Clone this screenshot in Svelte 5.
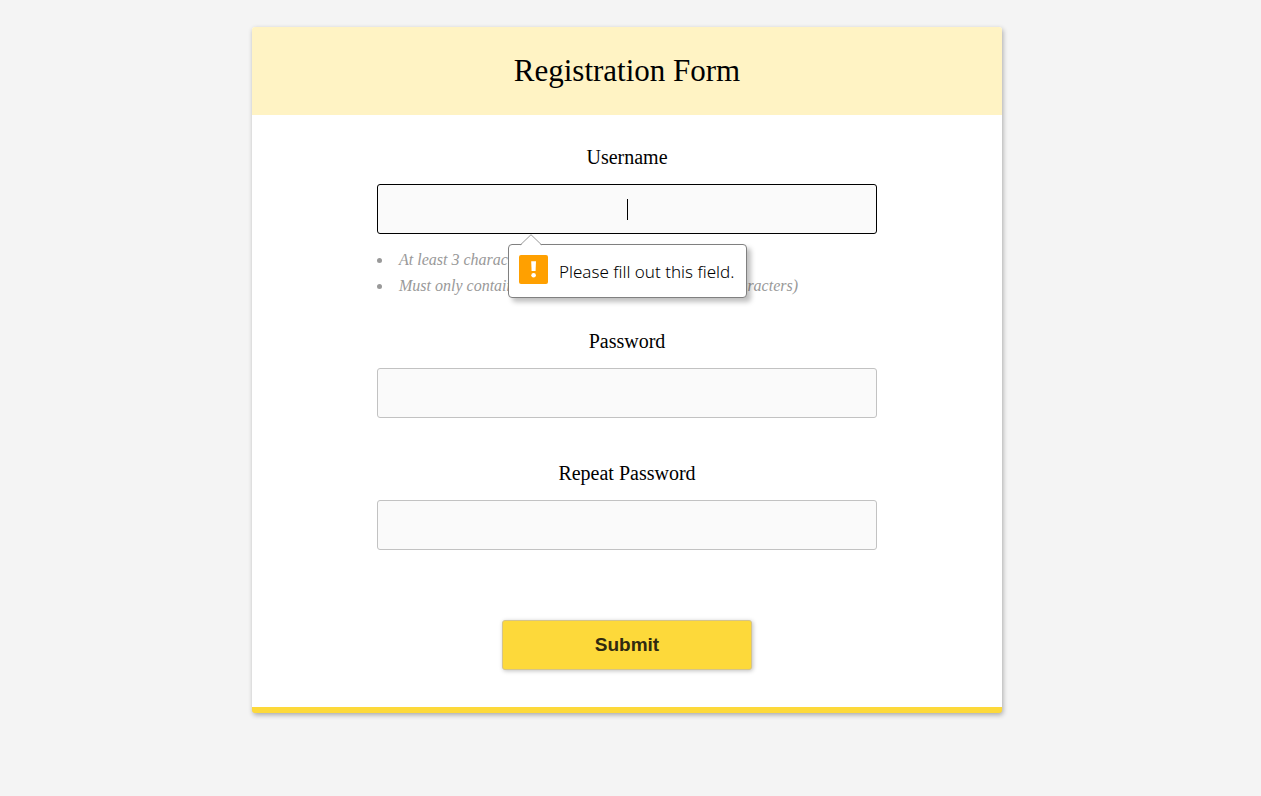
<script>
  const FIELDS = [
    {
      id: 'username',
      label: 'Username',
      type: 'text',
      rules: [
        'At least 3 characters long',
        'Must only contain letters and numbers (no special characters)',
      ],
    },
    { id: 'password', label: 'Password', type: 'password', rules: [] },
    { id: 'password-repeat', label: 'Repeat Password', type: 'password', rules: [] },
  ]

  let values = $state({ username: '', password: '', 'password-repeat': '' })
  let active = $state('username')
  let invalid = $state('username')

  function submit(e) {
    e.preventDefault()
    const empty = FIELDS.find((f) => !values[f.id])
    invalid = empty ? empty.id : ''
    if (empty) {
      active = empty.id
      document.getElementById(empty.id).focus()
    }
  }
</script>

<main class="page">
  <form class="card" novalidate onsubmit={submit}>
    <h1 class="title">Registration Form</h1>

    <div class="body">
      {#each FIELDS as f}
        <div class="field">
          <label for={f.id}>{f.label}</label>
          <div class="control">
            <input
              id={f.id}
              type={f.type}
              class:active={active === f.id}
              class:empty={!values[f.id]}
              bind:value={values[f.id]}
              onfocus={() => (active = f.id)}
              oninput={() => (invalid = '')}
            />
            {#if active === f.id && !values[f.id]}
              <span class="caret"></span>
            {/if}
            {#if invalid === f.id}
              <div class="bubble" role="alert">
                <svg class="arrow" width="22" height="12" viewBox="0 0 22 12" aria-hidden="true">
                  <path d="M0.5 12V11.5L11 0.7L21.5 11.5V12Z" fill="#fff" />
                  <path d="M0.5 10.8L11 0.7L21.5 10.8" fill="none" stroke="#999" />
                </svg>
                <svg class="icon" width="29" height="29" viewBox="0 0 29 29" aria-hidden="true">
                  <rect width="29" height="29" rx="2" fill="#ffa000" />
                  <path d="M12.2 6.3h4.8l-.4 9.7h-4z" fill="#fff" />
                  <circle cx="14.6" cy="20.3" r="2.3" fill="#fff" />
                </svg>
                <span>Please fill out this field.</span>
              </div>
            {/if}
          </div>
          <ul class="rules">
            {#each f.rules as rule}
              <li>{rule}</li>
            {/each}
          </ul>
        </div>
      {/each}

      <button class="submit" type="submit">Submit</button>
    </div>
  </form>
</main>

<style>
  :global(body) {
    margin: 0;
    background: #f4f4f4;
  }
  .page {
    padding: 27px 7px 27px 0;
    font-family: 'Liberation Serif', 'Times New Roman', serif;
    color: #000;
  }
  .card {
    max-width: 750px;
    margin: 0 auto;
    background: #fff;
    border-bottom: 6px solid #fdd93a;
    border-radius: 3px;
    box-shadow: 1px 2px 5px rgba(0, 0, 0, .31);
  }
  .title {
    margin: 0;
    padding: 24px;
    border-radius: 3px 3px 0 0;
    background: #fff3c4;
    font-size: 31px;
    line-height: 40px;
    font-weight: 400;
    text-align: center;
  }
  .body {
    display: flex;
    flex-direction: column;
    align-items: center;
    padding: 29px 24px 37px;
  }
  .field {
    width: 100%;
    max-width: 500px;
  }
  label {
    display: block;
    margin-bottom: 14px;
    font-size: 20px;
    line-height: 26px;
    text-align: center;
  }
  .control {
    position: relative;
  }
  input {
    display: block;
    box-sizing: border-box;
    width: 100%;
    height: 50px;
    padding: 0 16px;
    border: 1px solid #c2c2c2;
    border-radius: 3px;
    outline: none;
    background: #fafafa;
    font-family: inherit;
    font-size: 20px;
    text-align: center;
  }
  input.active {
    border-color: #000;
  }
  input.empty {
    caret-color: transparent;
  }
  .caret {
    position: absolute;
    top: 15px;
    left: 50%;
    width: 1px;
    height: 21px;
    background: #000;
    pointer-events: none;
  }
  .bubble {
    position: absolute;
    z-index: 1;
    top: 60px;
    left: 131px;
    display: flex;
    gap: 11px;
    box-sizing: border-box;
    min-width: 239px;
    height: 54px;
    padding: 10px;
    border: 1px solid #808080;
    border-radius: 4px;
    background: #fff;
    box-shadow: 4px 4px 5px rgba(0, 0, 0, .25);
    font-family: 'Noto Sans', 'Open Sans', sans-serif;
    font-size: 17px;
    font-weight: 300;
    line-height: 34px;
    white-space: nowrap;
  }
  .arrow {
    position: absolute;
    top: -11px;
    left: 11px;
  }
  .rules {
    margin: 0;
    padding: 13px 0 29px;
    list-style: none;
    color: #999;
    font-size: 16px;
    font-style: italic;
    line-height: 26px;
  }
  .rules li {
    display: flex;
    align-items: center;
    gap: 17px;
  }
  .rules li::before {
    content: '';
    flex: none;
    width: 5px;
    height: 5px;
    border-radius: 50%;
    background: #999;
  }
  .submit {
    width: 250px;
    height: 50px;
    margin-top: 28px;
    border: 1px solid #d5c48a;
    border-radius: 3px;
    background: #fdd93a;
    box-shadow: 1px 1px 4px rgba(0, 0, 0, .25);
    color: #302a10;
    font-family: 'Liberation Sans', Arial, sans-serif;
    font-size: 19px;
    font-weight: 700;
    cursor: pointer;
  }
</style>
